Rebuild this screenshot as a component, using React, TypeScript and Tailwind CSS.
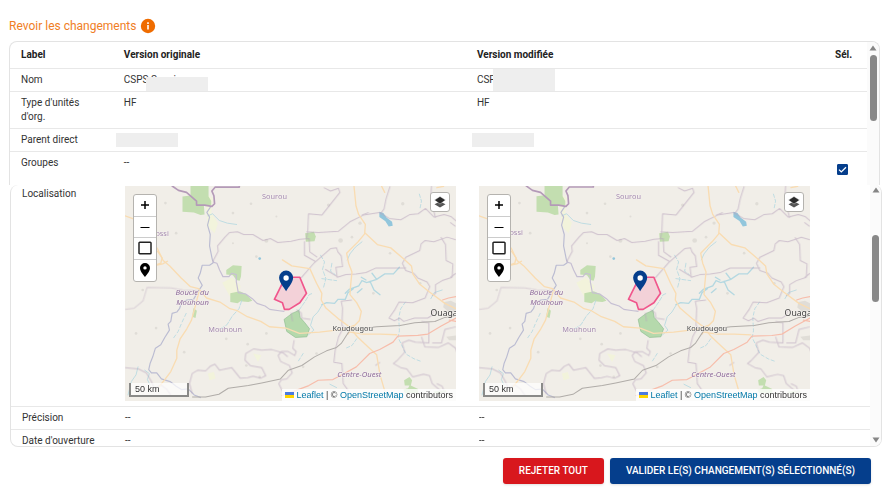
import type { ReactNode } from "react";

const BORDER = "#b9a5bd";

function MapDrawing() {
  return (
    <svg viewBox="27 18 990 645" preserveAspectRatio="xMidYMid slice" className="absolute inset-0 size-full" aria-hidden="true">
      <rect x="0" y="0" width="1040" height="690" fill="#f1eee8" />
      <g fill="#f3f5d8" opacity="0.8">
        <path d="M265 40l25 15-5 45 20 30-10 30-20-20z" />
        <path d="M318 308l30-15 25 25-10 40-20-5z" />
        <path d="M275 580l18-5 5 20-18 5zM410 520l25 5-10 20z" />
      </g>
      <g fill="#c3deb0">
        <path d="M199 50l24-3v-29h54v32l8 14v12l-22 2 2 26-12 2-20-8-34-2z" />
        <path d="M330 270l20-14 26 2-2 32-4 12-10-2-10-14-20-2z" />
        <path d="M342 340l28-6 20 8 18 20-12 4-24-2-8 6-22-4z" />
        <path d="M566 160l26-4 6 14-4 14-26 2z" />
        <path d="M232 384l10 8-4 22-10-4z" />
        <path d="M862 600l16-10 8 10-4 16 22 10 0 12-40 0-4-10 14-4 4-8-14 0z" />
        <path d="M950 634l36-4 4 6-36 4z" />
      </g>
      <path d="M503 418l24-18 14-6 6-4 4 22 14 16 14 18-8 24-34 2-26-18z" fill="#b5d9ac" stroke="#8fbd90" strokeWidth="2" />
      <g fill="#e0ddd7">
        <circle cx="450" cy="183" r="6" /><circle cx="404" cy="72" r="4" /><circle cx="636" cy="76" r="5" />
        <circle cx="148" cy="70" r="4" /><circle cx="350" cy="100" r="4" /><circle cx="420" cy="230" r="4" />
        <circle cx="730" cy="130" r="5" /><circle cx="672" cy="182" r="7" /><circle cx="706" cy="172" r="4" />
        <circle cx="858" cy="72" r="5" /><circle cx="910" cy="310" r="4" /><circle cx="394" cy="492" r="4" />
        <circle cx="120" cy="444" r="4" /><circle cx="330" cy="476" r="4" /><circle cx="450" cy="460" r="4" />
        <circle cx="204" cy="516" r="4" /><circle cx="390" cy="556" r="4" /><circle cx="430" cy="590" r="4" />
        <circle cx="770" cy="340" r="4" /><circle cx="820" cy="220" r="4" /><circle cx="480" cy="110" r="3" />
        <circle cx="560" cy="560" r="4" /><circle cx="600" cy="520" r="4" /><circle cx="180" cy="160" r="4" />
        <circle cx="350" cy="190" r="3" /><circle cx="80" cy="330" r="4" /><circle cx="60" cy="460" r="4" />
        <path d="M982 366l20-4 15 8v26l-22 0-16-14z" /><path d="M988 470l29-4v14l-20 0z" />
      </g>
      <g fill="none" stroke="#b4d8e1" strokeWidth="2.5" strokeLinecap="round">
        <path d="M275 108l14-6 20 20 24 8 28 4" />
        <path d="M376 362l-8 24-20 22-16 26-22 14" strokeDasharray="14 5" />
        <path d="M210 400l-14 30-10 24-14 20" strokeDasharray="10 8" />
        <path d="M66 560l-6 24-14 20-10 40M86 570l14 10-6 18 8 16" />
        <path d="M736 186l-20 16-16 20-8 18" />
        <path d="M612 226l12 20-6 22 10 28-8 30M616 296l44 6M646 250l-4 24 14 10" strokeDasharray="12 6" />
        <path d="M848 262l-18 20-26 0-24 16-30 10-14-6-10 16-28 10-12 12M760 304l12 26 18 14M748 300l-14-8M780 298l-14-18M722 338l14-12M710 326l-16 12-8 20-22 0-10 12-24-2-14 6" strokeWidth="4" />
        <path d="M616 376l-12 20-14 14-8 26 10 14-16 14" />
        <path d="M548 390l18-26 12-20 10-4" strokeDasharray="12 5" />
        <path d="M866 366l-14 20-6 26 2 40-4 20 14 30 10 20 24 14 22 8" strokeDasharray="10 7" />
        <path d="M910 84l4-20-8-26M720 476l-14 20-18 8M560 520l-14 22" strokeDasharray="10 6" />
        <path d="M640 612l20 10M560 630l-8 20M976 330l-24 8-10 18" />
      </g>
      <g fill="#92c6dc">
        <path d="M788 96l12 4 10 14 16 12 2 12-12 2-10-16-18-12z" />
        <circle cx="430" cy="236" r="4" />
      </g>
      <g fill="none" stroke="#c6bfd3" strokeWidth="3.5" strokeLinejoin="round">
        <path d="M284 80l-12 18 8 14-6 24 8 28-2 34 8 40 4 10-12 8-22 0-6 24-6 14 12 22-12 18-14 24-20 2-16 8-6 18-8 10-14 4-4 24-8 8 4 18-14 22-12 22-16 10-8 26-8 20-4 18 8 10 16 0 14 18 26 8 18 14 16 10 20-2 18 18 20 8" stroke="#bbbcd2" />
        <path d="M288 246l14 4 8 20 10 20 18 0 8-10 14 4 0 22 6 32 22 4 20 14 14 14 24 8 14 10 28 4 16 2" />
      </g>
      <g fill="none" stroke={BORDER} strokeWidth="3" strokeLinejoin="round" opacity="0.6">
        <path d="M290 244l16-30-2-16 22-26 14-14 24-2 18 8 28 0 30 18 22-6 22 12 40-4 26-6 28-2 2 40 22 16" />
        <path d="M570 178l4-26 2-50 40 4 54-68-4-12-24 8-20-10" />
        <path d="M570 156l36 2 60-4 34-28 40-20 48-8 30 18 34 4 28-16 24-2 22-16 26 26 30-8 20 6 21 18M1000 128l16 12" />
        <path d="M736 106l20-8M820 20l-12 38-6 30-12 16M944 18l-2 34 8 38 6 24M972 172l14 22 2 48 20 10-2 40" />
        <path d="M1017 180l-26-8-40 14-26-4-12 10-4 20-42 20-10 18 10 22 24 8 12 14 28 12 8 14-14 34-38 14-40-2-12 22-18 26 16 8 16-8 12 10 32-10 40 0 12-8 6-18" />
        <path d="M1006 292l-30 10-20 12 0 26-10 8M1017 280l-16 12" />
        <path d="M868 264l-50 0-40 0-30 14-30 4-30 2-26 8-4-30 20-2-4-32-10-12-4-12-18 2-48 42-40 46M564 184l0 42 32 18" />
        <path d="M626 268l36 22" />
        <path d="M706 360l-32 4 4 20-2 50 6 16M682 440l-16 30-10 40-4 36 24 4 4 60 20 28" />
        <path d="M27 388l28-4 26-22 12-40 72 2 34 6 48 2" opacity="0.7" />
        <path d="M27 562l40 4 24 12 14 24 10 22 20-10 16 12 14 20M228 640l-8-30 8-30 16-10 24 2 14-14 14-6 14 18 36-8 26 32 22-2 16-4 22 6 16-8-12-24-34-6-16-16 2-20 24-14 24 4 30-2 34 10 14 12" />
        <path d="M533 480l-4 24 10 10-4 12-20-12-20 0-10 12 8 18 26 12 8 22-16 18-16 2-8 12 12 24" />
        <path d="M524 398l4 26M540 390l14 8 2 16 26 4" />
        <path d="M914 424l22 4 0 60-40-2-20-6-20 8 8 28-24 26-10 8 22 12 18 4 18 24 32-8 18 4 8 24 40 34M914 470l10 30 40 2 30-14 22 16 6 20M946 488l28 0 10-40 33-8" />
        <path d="M960 610l16 8 8 22M790 546l-14 10" />
      </g>
      <path d="M167 18l20 14 24 6 30 26 0 12 24 0 22 4 8-8-2-24-6-14 10-12h72v-4" fill="none" stroke="#b49ab8" strokeWidth="5" strokeLinejoin="round" />
      <g fill="none" stroke="#f9dcb2" strokeWidth="4" strokeLinecap="round" strokeLinejoin="round">
        <path d="M27 108l34 12 30 34 20 34 14 20 16 34 20 16 34 36 28 26 24 6 24 28 40 12 30 20 22 6 30 18 40 14 26 16 50 4 40 16 60-4 70-8 34-12" />
        <path d="M124 214l14 20-4 16-22 8 28-6 14-8" />
        <path d="M248 336l-10 40-12 44-14 26-20 30-10 34 0 24-18 40-18 24-16 20" />
        <path d="M712 18l6 60 8 26 20 30-2 28-20 24-34 34 6 30 10 26-4 40-2 28 20 24 14 26-6 28-24 24-10 16" />
        <path d="M746 160l36 34 40 10 40 34 22 20 4 24 20 30 30 24 46 34 33 16" />
        <path d="M498 240l28 18 54 8 20 44 16 30-2 20 14 24 40 34 30 22 24 30 34 32 24 22 10 60 14 48" />
        <path d="M700 456l40 6 50 0 50 2M794 18l10 20M960 24l20-4" />
      </g>
      <g fill="none" stroke="#f7bdab" strokeWidth="3.5" strokeLinecap="round" strokeLinejoin="round">
        <path d="M1017 414l-44 24-40 24-30 4-60 2-14 18-40 22-30 12-40 40-40 22-30 16-44 2-28 16-80 30M1017 350l-22 4-18 6M1017 424l-20-4" />
      </g>
      <path d="M228 650l40 0 40-8 28-18 60-8 40-8 56-12 24-26 40-14 38-26 36-18 30-10 14-12 26-40 80-10 70-4 44-8 60-4 30-12 33-6" fill="none" stroke="#b0aca8" strokeWidth="3" strokeLinejoin="round" />
      <g fontFamily="'Noto Sans', sans-serif" stroke="#f5f2ee" strokeWidth="3" paintOrder="stroke">
        <g fill="#a58bb0" fontSize="22">
          <text x="437" y="59">Sourou</text>
          <text x="118" y="167">ossi</text>
          <text x="276" y="457">Mouhoun</text>
        </g>
        <g fill="#8f6c9c" fontSize="23" fontStyle="italic">
          <text x="178" y="346">Boucle du</text>
          <text x="180" y="375">Mouhoun</text>
          <text x="662" y="590">Centre-Ouest</text>
        </g>
        <text x="648" y="452" fill="#4b4b4b" fontSize="22">Koudougou</text>
        <text x="941" y="407" fill="#3f3f3f" fontSize="26">Ouaga</text>
      </g>
      <path d="M508 292h42l20 48-20 28-32 20h-14l-6-20-24-10 26-52z" fill="#f8a5c0" fillOpacity="0.4" stroke="#f0568c" strokeWidth="5" strokeLinejoin="round" />
      <path d="M509 334c-8-14-21-26-21-41a21 21 0 1 1 42 0c0 15-13 27-21 41z" fill="#053e8c" />
      <circle cx="509" cy="294" r="8" fill="#fff" />
    </svg>
  );
}

function LocationMap({ name }: { name: string }) {
  const tool = "flex w-full items-center justify-center border-b border-[#cccccc] last:border-b-0";
  return (
    <div role="group" aria-label={name} className="relative h-[215px] w-full overflow-hidden font-['Liberation_Sans',sans-serif] text-[9px] leading-3">
      <MapDrawing />
      <div className="absolute top-2 left-2 grid h-[88px] w-6 grid-rows-4 overflow-hidden rounded-[3px] border border-[#b5b3af] bg-white text-black">
        <button type="button" aria-label="Zoom avant" className={tool}>
          <svg viewBox="0 0 12 12" className="size-3" stroke="currentColor" strokeWidth="1.5"><path d="M6 2v8M2 6h8" /></svg>
        </button>
        <button type="button" aria-label="Zoom arrière" className={tool}>
          <svg viewBox="0 0 12 12" className="size-3" stroke="currentColor" strokeWidth="1.2"><path d="M1.500 6.500h9" /></svg>
        </button>
        <button type="button" aria-label="Ajuster la vue" className={tool}>
          <svg viewBox="0 0 14 14" className="size-3.5" fill="none" stroke="#222" strokeWidth="1.5"><rect x="1" y="1.200" width="12" height="11.600" rx="0.8" /></svg>
        </button>
        <button type="button" aria-label="Centrer sur le point" className={tool}>
          <svg viewBox="0 0 12 16" className="h-4 w-3" fill="currentColor"><path fillRule="evenodd" d="M6 1a5 5 0 0 0-5 5c0 3.6 5 9 5 9s5-5.400 5-9a5 5 0 0 0-5-5zm0 6.600a1.700 1.700 0 1 1 0-3.400 1.700 1.700 0 0 1 0 3.400z" /></svg>
        </button>
      </div>
      <button type="button" aria-label="Couches" className="absolute top-1.5 right-1.5 flex size-5 items-center justify-center rounded-[3px] border border-[#b5b3af] bg-white">
        <svg viewBox="0 0 12 12" className="size-3">
          <path d="M6 5.600L11.500 8.300 6 11.400 0.500 8.300z" fill="#555" />
          <path d="M6 0.500l5.500 3.600L6 8 0.500 4.100z" fill="#2b2b2b" stroke="#fff" strokeWidth="0.4" />
        </svg>
      </button>
      <div className="absolute bottom-1 left-1 w-15 border-2 border-t-0 border-[#8a8a88] bg-white/70 px-1 text-[#333]">50 km</div>
      <div className="absolute right-0 bottom-0 flex items-center gap-0.5 bg-white/80 px-[3px] whitespace-nowrap text-[#333]">
        <svg viewBox="0 0 9 6" className="h-1.5 w-[9px]" aria-hidden="true"><path fill="#4c7be1" d="M0 0h9v3H0z" /><path fill="#ffd500" d="M0 3h9v3H0z" /></svg>
        <span>
          <a href="#leaflet" className="text-[#0078a8]">Leaflet</a> | © <a href="#osm" className="text-[#0078a8]">OpenStreetMap</a> contributors
        </span>
      </div>
    </div>
  );
}

function Arrow({ down = false }: { down?: boolean }) {
  return (
    <svg viewBox="0 0 8 6" className="h-1.5 w-2 shrink-0" fill="#868686" aria-hidden="true">
      <path d={down ? "M0.500 0.500h7L4 5.500z" : "M0.500 5.500h7L4 0.500z"} />
    </svg>
  );
}

function Columns() {
  return (
    <colgroup>
      <col className="w-[12%]" />
      <col className="w-[41.2%]" />
      <col />
      <col className="w-[43px]" />
    </colgroup>
  );
}

const cell = "px-[11px] py-1 align-top font-normal text-left";

function Row({ label, before, after, check }: { label: string; before: ReactNode; after: ReactNode; check?: ReactNode }) {
  return (
    <tr className="border-b border-[#e8e8e8] last:border-b-0">
      <th scope="row" className={cell}>{label}</th>
      <td className={`${cell} relative`}>{before}</td>
      <td className={`${cell} relative`}>{after}</td>
      <td className={cell}>{check}</td>
    </tr>
  );
}

export default function App() {
  const head = "px-[11px] py-1.5 text-left font-bold";
  const button = "h-[26px] rounded-[3px] px-4 shadow";
  return (
    <main className="min-h-screen bg-white pr-2.5 pl-[9px] pt-[18px] font-['Roboto',sans-serif] text-[10px] leading-[14px] text-[#333]">
      <h1 className="flex h-4 items-center gap-1 text-xs text-[#f07e26]">
        Revoir les changements
        <svg viewBox="0 0 16 16" className="size-4" aria-hidden="true">
          <circle cx="8" cy="8" r="7.200" fill="#ef6c00" />
          <path d="M7.200 7h1.600v4.500H7.200zM7.200 4.300h1.600v1.600H7.200z" fill="#fff" />
        </svg>
      </h1>

      <section className="mt-[7px] mr-0.5 flex h-[144px] overflow-hidden rounded-t-lg border border-b-0 border-[#e3e3e3]">
        <table className="w-full min-w-0 flex-1 table-fixed self-start border-collapse">
          <Columns />
          <thead>
            <tr className="border-b border-[#e8e8e8] text-[#222]">
              <th scope="col" className={head}>Label</th>
              <th scope="col" className={head}>Version originale</th>
              <th scope="col" className={head}>Version modifiée</th>
              <th scope="col" className={head}>Sél.</th>
            </tr>
          </thead>
          <tbody>
            <Row
              label="Nom"
              before={<>CSPS Sanning<span className="absolute bottom-0 left-[33px] h-3.5 w-[62px] bg-[#eee]" /></>}
              after={<>CSPS<span className="absolute bottom-0 left-[27px] h-[22px] w-[62px] bg-[#eee]" /></>}
            />
            <Row label="Type d'unités d'org." before="HF" after="HF" />
            <Row
              label="Parent direct"
              before={<span className="absolute top-1 left-[3px] h-3.5 w-[62px] bg-[#eee]" />}
              after={<span className="absolute top-1 left-1.5 h-3.5 w-[62px] bg-[#eee]" />}
            />
            <Row
              label="Groupes"
              before="--"
              after=""
              check={
                <span className="relative mt-2 ml-0.5 block size-[11px]">
                  <input type="checkbox" defaultChecked aria-label="Sélectionner Groupes" className="block size-[11px] appearance-none rounded-[1px] border border-[#053e8c] bg-white checked:bg-[#053e8c]" />
                  <svg viewBox="0 0 11 11" className="pointer-events-none absolute inset-0 size-[11px]" fill="none" stroke="#fff" strokeWidth="1.300"><path d="M2 5.600l2.300 2.300L9 3.200" /></svg>
                </span>
              }
            />
          </tbody>
        </table>
        <div className="flex w-3 flex-col items-center gap-1 bg-[#fbfbfb] pt-[3px]">
          <Arrow />
          <div className="h-[66px] w-[7px] rounded-full bg-[#888]" />
        </div>
      </section>

      <section className="ml-px flex h-[262px] overflow-hidden rounded-lg border border-t-0 border-[#e3e3e3]">
        <table className="w-full min-w-0 flex-1 table-fixed self-start border-collapse">
          <Columns />
          <tbody>
            <tr className="border-b border-[#e8e8e8]">
              <th scope="row" className="px-[11px] pt-0.5 text-left align-top font-normal">Localisation</th>
              <td className="pt-px pr-3 pb-[5px] pl-[11px]"><LocationMap name="Localisation originale" /></td>
              <td className="pt-px pr-[17px] pb-[5px] pl-[11px]"><LocationMap name="Localisation modifiée" /></td>
              <td />
            </tr>
            <Row label="Précision" before="--" after="--" />
            <Row label="Date d'ouverture" before="--" after="--" />
          </tbody>
        </table>
        <div className="flex w-[11px] flex-col items-center bg-[#fbfbfb] pt-0.5 pb-[3px]">
          <Arrow />
          <div className="mt-[42px] mb-auto h-[67px] w-[7px] rounded-full bg-[#888]" />
          <Arrow down />
        </div>
      </section>

      <div className="mt-[11px] mr-[11px] flex justify-end gap-1.5 font-medium text-white">
        <button type="button" className={`${button} bg-[#d8171d]`}>REJETER TOUT</button>
        <button type="button" className={`${button} bg-[#053e8c]`}>VALIDER LE(S) CHANGEMENT(S) SÉLECTIONNÉ(S)</button>
      </div>
    </main>
  );
}
